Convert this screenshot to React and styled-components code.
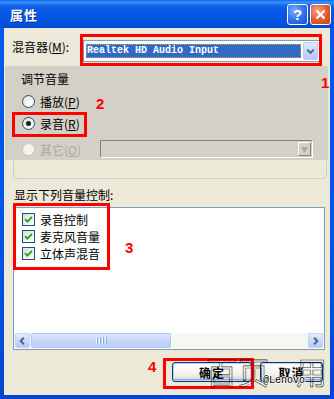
import React from 'react';
import styled, { createGlobalStyle } from 'styled-components';

const GlobalStyle = createGlobalStyle`
    html, body {
        margin: 0;
        padding: 0;
        background: #ffffff;
    }
    * {
        box-sizing: border-box;
    }
`;

const cjk = `"Noto Sans CJK SC", "Liberation Sans", sans-serif`;

const Window = styled.div`
    width: 334px;
    height: 399px;
    display: flex;
    flex-direction: column;
    background: linear-gradient(180deg, #0058ee 0%, #0055e5 60%, #0046d0 100%);
    font-family: ${cjk};
    font-size: 12px;
    color: #000;
    overflow: hidden;
`;

const TitleBar = styled.div`
    height: 28px;
    flex: none;
    display: flex;
    align-items: center;
    justify-content: space-between;
    padding: 0 3px 0 10px;
    background: linear-gradient(
        180deg,
        #0a6cf5 0%,
        #3d91f7 8%,
        #0e60ea 22%,
        #0457e4 55%,
        #0552de 85%,
        #0248cf 100%
    );
`;

const Title = styled.span`
    color: #fff;
    font-weight: 700;
    font-size: 13px;
    letter-spacing: 1px;
    text-shadow: 1px 1px 0 #0a2a8a;
`;

const TitleButtons = styled.div`
    display: flex;
    gap: 2px;
`;

const CaptionBtn = styled.div`
    width: 21px;
    height: 21px;
    border: 1px solid #ffffff;
    border-radius: 3px;
    display: flex;
    align-items: center;
    justify-content: center;
    color: #fff;
    font-family: "Liberation Sans", sans-serif;
    font-weight: 700;
    font-size: 15px;
    background: ${(p) =>
        p.$close
            ? 'radial-gradient(circle at 35% 30%, #f3a27f 0%, #e3592f 55%, #c8431c 100%)'
            : 'radial-gradient(circle at 35% 30%, #7eb0ff 0%, #2c6fe9 55%, #1c55d0 100%)'};
    box-shadow: inset 0 0 1px rgba(0, 0, 0, 0.3);
`;

const Body = styled.div`
    flex: 1;
    margin: 0 4px 4px 4px;
    background: #ece9d8;
    position: relative;
    display: flex;
    flex-direction: column;
`;

const MixerRow = styled.div`
    height: 38px;
    flex: none;
    display: flex;
    align-items: flex-start;
    padding: 12px 0 0 8px;
`;

const MixerLabel = styled.span`
    width: 71px;
    line-height: 16px;
    margin-top: -1px;
    white-space: nowrap;
`;

const Combo = styled.div`
    width: ${(p) => p.$w}px;
    height: ${(p) => p.$h}px;
    display: flex;
    gap: 2px;
    padding: 1px;
    background: ${(p) => (p.$disabled ? 'transparent' : '#fff')};
    border: 1px solid ${(p) => (p.$disabled ? '#808080' : '#7f9db9')};
    border-right-color: ${(p) => (p.$disabled ? '#ffffff' : '#7f9db9')};
    border-bottom-color: ${(p) => (p.$disabled ? '#ffffff' : '#7f9db9')};
    margin-left: ${(p) => (p.$disabled ? 'auto' : '0')};
`;

const Selected = styled.div`
    flex: 1;
    margin: 2px 0 2px 1px;
    background: #316ac5;
    outline: 1px dotted #c9a65a;
    outline-offset: -1px;
    color: #fff;
    font-family: "Liberation Mono", monospace;
    font-size: 10px;
    font-weight: 700;
    line-height: 14px;
    padding-left: 1px;
    white-space: nowrap;
`;

const DropBtn = styled.div`
    width: 15px;
    display: flex;
    align-items: center;
    justify-content: center;
    border-radius: 2px;
    background: linear-gradient(180deg, #e2ebfe 0%, #c6d6fb 50%, #b5c8f7 100%);
    border: 1px solid #bccdf5;
`;

const GrayDropBtn = styled.div`
    width: 13px;
    display: flex;
    align-items: center;
    justify-content: center;
    background: #d4d0c8;
    border: 1px solid;
    border-color: #fff #808080 #808080 #fff;
    color: #aca899;
    font-size: 7px;
`;

const GroupArea = styled.div`
    width: 323px;
    margin-left: 1px;
    padding: 5px 0 0 8px;
    background: linear-gradient(180deg, #d4d0c8 0 94px, #ece9d8 94px);
`;

const Group = styled.fieldset`
    width: 314px;
    margin: 0;
    padding: 0 0 18px 0;
    border: 1px solid #d0d0bf;
    border-radius: 4px;
`;

const Legend = styled.legend`
    margin-left: 5px;
    padding: 0 2px;
    line-height: 16px;
    font-size: 12px;
`;

const RadioList = styled.div`
    padding: 3px 13px 0 8px;
    display: flex;
    flex-direction: column;
`;

const RadioRow = styled.div`
    height: 22px;
    display: flex;
    align-items: center;
    gap: 5px;
    margin-top: ${(p) => (p.$gap ? 4 : 0)}px;
    color: ${(p) => (p.$disabled ? '#aca899' : '#000')};
`;

const Radio = styled.span`
    width: 13px;
    height: 13px;
    flex: none;
    border-radius: 50%;
    border: 1px solid ${(p) => (p.$disabled ? '#cac8bb' : '#1c5180')};
    background: ${(p) =>
        p.$disabled
            ? '#f4f3ee'
            : 'radial-gradient(circle at 70% 70%, #ffffff 0%, #f0efe8 50%, #dcdcd6 100%)'};
    display: flex;
    align-items: center;
    justify-content: center;
    &::after {
        content: '';
        width: 5px;
        height: 5px;
        border-radius: 50%;
        background: #1d1d1d;
        display: ${(p) => (p.$checked ? 'block' : 'none')};
    }
`;

const Key = styled.span`
    text-decoration: underline;
`;

const ListLabel = styled.div`
    margin-top: 8px;
    padding-left: 10px;
    line-height: 16px;
`;

const ListBox = styled.div`
    width: 312px;
    height: 143px;
    margin: 4px 0 0 9px;
    border: 1px solid #7f9db9;
    background: #fff;
    display: flex;
    flex-direction: column;
`;

const Items = styled.div`
    flex: 1;
    padding: 3px 0 0 8px;
`;

const Item = styled.div`
    height: 17px;
    display: flex;
    align-items: center;
    gap: 5px;
`;

const CheckBox = styled.span`
    width: 13px;
    height: 13px;
    flex: none;
    border: 1px solid #1c5180;
    background: linear-gradient(135deg, #dcdcd7 0%, #f6f6f3 70%, #ffffff 100%);
    display: flex;
    align-items: center;
    justify-content: center;
`;

const HScroll = styled.div`
    height: 16px;
    flex: none;
    display: flex;
    padding: 0 1px 1px 1px;
    background: #f7f7f2;
`;

const ScrollBtn = styled.div`
    width: 15px;
    display: flex;
    align-items: center;
    justify-content: center;
    border-radius: 2px;
    border: 1px solid #c3d3fd;
    background: linear-gradient(180deg, #e3ebfe 0%, #c8d8fb 55%, #b6caf6 100%);
`;

const Thumb = styled.div`
    width: 140px;
    margin-left: 1px;
    border-radius: 2px;
    border: 1px solid #b3c7f5;
    background: linear-gradient(180deg, #dde7fe 0%, #c8d7fc 50%, #bacdf8 100%);
    display: flex;
    align-items: center;
    justify-content: center;
    gap: 1px;
`;

const Grip = styled.span`
    width: 1px;
    height: 7px;
    background: #eef3ff;
    box-shadow: 1px 0 0 #8ca8e6;
    margin-right: 1px;
`;

const Spacer = styled.div`
    flex: 1;
`;

const ButtonRow = styled.div`
    margin-top: 12px;
    display: flex;
    justify-content: flex-end;
    gap: 8px;
    padding-right: 7px;
`;

const Button = styled.div`
    width: ${(p) => p.$w}px;
    height: 20px;
    display: flex;
    align-items: center;
    justify-content: center;
    border: 1px solid #003c74;
    border-radius: 3px;
    background: linear-gradient(180deg, #ffffff 0%, #f4f3ee 60%, #d9d5c8 100%);
    box-shadow: inset 0 0 0 1px #b9d1f6, inset 0 -1px 0 1px #88a8e8;
    font-weight: 700;
    letter-spacing: 1px;
`;

const Mark = styled.div`
    position: absolute;
    left: ${(p) => p.$x}px;
    top: ${(p) => p.$y}px;
    width: ${(p) => p.$w}px;
    height: ${(p) => p.$h}px;
    border: 3px solid #ff0000;
    pointer-events: none;
`;

const Num = styled.span`
    position: absolute;
    left: ${(p) => p.$x}px;
    top: ${(p) => p.$y}px;
    color: #ff0000;
    font-family: "Liberation Sans", sans-serif;
    font-weight: 700;
    font-size: 15px;
    line-height: 15px;
`;

const Watermark = styled.div`
    position: absolute;
    left: 202px;
    top: 326px;
    display: flex;
    gap: 1px;
    font-family: ${cjk};
    font-size: 31px;
    line-height: 34px;
    color: transparent;
    -webkit-text-stroke: 0.6px rgba(0, 0, 0, 0.85);
    pointer-events: none;
`;

const Glyph = styled.span`
    margin-left: ${(p) => p.$skip || 0}px;
`;

const Credit = styled.span`
    position: absolute;
    left: 259px;
    top: 347px;
    font-family: "Liberation Mono", monospace;
    font-size: 10px;
    line-height: 12px;
    color: #000;
    text-shadow: 1px 0 0 #fff, -1px 0 0 #fff, 0 1px 0 #fff, 0 -1px 0 #fff;
`;

const Chevron = ({ dir = 'down' }) => {
    const d = {
        down: 'M3.5 5.5 L7 9 L10.5 5.5',
        left: 'M8.5 3.5 L5 7 L8.5 10.5',
        right: 'M5.5 3.5 L9 7 L5.5 10.5',
    }[dir];
    return (
        <svg width="14" height="14" viewBox="0 0 14 14">
            <path d={d} fill="none" stroke="#4d6185" strokeWidth="2" />
        </svg>
    );
};

const Tick = () => (
    <svg width="9" height="9" viewBox="0 0 9 9">
        <path d="M1 4.2 L3.4 6.6 L8 1.8" fill="none" stroke="#21a121" strokeWidth="1.8" />
    </svg>
);

const controls = ['录音控制', '麦克风音量', '立体声混音'];

const App = () => {
    return (
        <>
            <GlobalStyle />
            <Window>
                <TitleBar>
                    <Title>属性</Title>
                    <TitleButtons>
                        <CaptionBtn>?</CaptionBtn>
                        <CaptionBtn $close>
                            <svg width="11" height="11" viewBox="0 0 11 11">
                                <path d="M1.5 1.5 L9.5 9.5 M9.5 1.5 L1.5 9.5" stroke="#fff" strokeWidth="2.2" />
                            </svg>
                        </CaptionBtn>
                    </TitleButtons>
                </TitleBar>
                <Body>
                    <MixerRow>
                        <MixerLabel>
                            混音器(<Key>M</Key>):
                        </MixerLabel>
                        <Combo $w={237} $h={22}>
                            <Selected>Realtek HD Audio Input</Selected>
                            <DropBtn>
                                <Chevron />
                            </DropBtn>
                        </Combo>
                    </MixerRow>

                    <GroupArea>
                        <Group>
                            <Legend>调节音量</Legend>
                            <RadioList>
                                <RadioRow>
                                    <Radio />
                                    <span>
                                        播放(<Key>P</Key>)
                                    </span>
                                </RadioRow>
                                <RadioRow>
                                    <Radio $checked />
                                    <span>
                                        录音(<Key>R</Key>)
                                    </span>
                                </RadioRow>
                                <RadioRow $gap $disabled>
                                    <Radio $disabled />
                                    <span>
                                        其它(<Key>O</Key>)
                                    </span>
                                    <Combo $w={213} $h={18} $disabled>
                                        <Spacer />
                                        <GrayDropBtn>▼</GrayDropBtn>
                                    </Combo>
                                </RadioRow>
                            </RadioList>
                        </Group>
                    </GroupArea>

                    <ListLabel>显示下列音量控制:</ListLabel>
                    <ListBox>
                        <Items>
                            {controls.map((c) => (
                                <Item key={c}>
                                    <CheckBox>
                                        <Tick />
                                    </CheckBox>
                                    <span>{c}</span>
                                </Item>
                            ))}
                        </Items>
                        <HScroll>
                            <ScrollBtn>
                                <Chevron dir="left" />
                            </ScrollBtn>
                            <Thumb>
                                <Grip />
                                <Grip />
                                <Grip />
                                <Grip />
                            </Thumb>
                            <Spacer />
                            <ScrollBtn>
                                <Chevron dir="right" />
                            </ScrollBtn>
                        </HScroll>
                    </ListBox>

                    <ButtonRow>
                        <Button $w={80}>确定</Button>
                        <Button $w={63}>取消</Button>
                    </ButtonRow>

                    {/* red annotations drawn over the dialog */}
                    <Mark $x={76} $y={6} $w={242} $h={32} />
                    <Num $x={317} $y={47}>1</Num>
                    <Num $x={92} $y={68}>2</Num>
                    <Mark $x={8} $y={84} $w={75} $h={25} />
                    <Mark $x={9} $y={175} $w={97} $h={67} />
                    <Num $x={121} $y={212}>3</Num>
                    <Mark $x={159} $y={330} $w={91} $h={31} />
                    <Num $x={144} $y={331}>4</Num>

                    <Watermark>
                        <Glyph>百</Glyph>
                        <Glyph>页</Glyph>
                        <Glyph $skip={26}>用</Glyph>
                    </Watermark>
                    <Credit>@Lenovo</Credit>
                </Body>
            </Window>
        </>
    );
};

export default App;
